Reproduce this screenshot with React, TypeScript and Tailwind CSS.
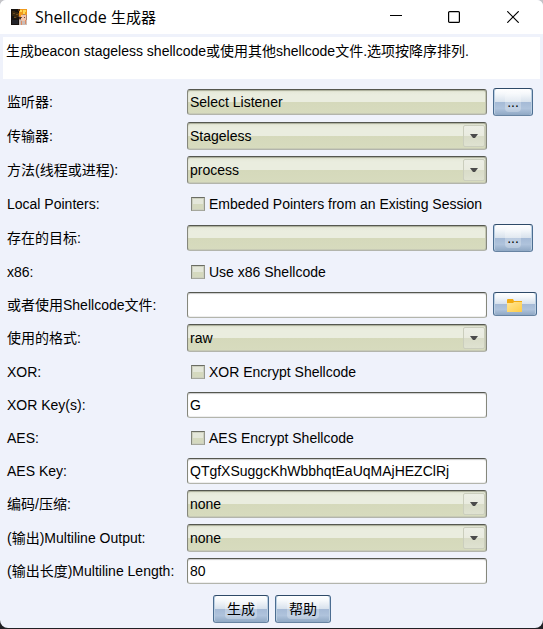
import type { ReactNode } from "react";

const FIELD_EDGE =
  "w-full min-w-0 rounded-[3px] border border-t-[#55574f] border-r-[#85877c] border-b-[#b3b5ac] border-l-[#85877c] pl-[2px] text-sm text-black outline-none";
const OLIVE =
  "bg-[linear-gradient(#e4e7d6_0%,#eaeddf_20%,#eaeddf_50%,#d5d9bb_50%,#d7dbbe_100%)] shadow-[inset_0_1px_1px_#a9ac98,inset_0_-1px_0_#c8cbb6,inset_-1px_0_0_#c8cbb6]";
const BLUE =
  "flex items-center justify-center rounded-[3px] border border-t-[#2e4a68] border-r-[#4b6d91] border-b-[#6884a2] border-l-[#4b6d91] bg-[linear-gradient(#ffffff_0%,#f5f8fb_18%,#d7e1ec_50%,#a5bad6_50%,#afc3dc_75%,#8fa8c4_100%)] text-sm text-black shadow-[inset_1px_0_0_#bccfe2,inset_-1px_0_0_#bccfe2]";

function Row({ id, label, action, children }: { id: string; label: string; action?: ReactNode; children: ReactNode }) {
  return (
    <div className="grid grid-cols-[174px_minmax(0,1fr)_44px] items-center gap-[6px]">
      <label htmlFor={id} className="whitespace-nowrap text-sm leading-5">
        {label}
      </label>
      {children}
      {action}
    </div>
  );
}

function TextRow({ id, label, value = "", olive = false, action }: { id: string; label: string; value?: string; olive?: boolean; action?: ReactNode }) {
  const look = olive ? OLIVE : "bg-white shadow-[inset_0_1px_1px_#c9c9c9,inset_0_-1px_0_#eeeeee]";
  return (
    <Row id={id} label={label} action={action}>
      <input id={id} type="text" defaultValue={value} readOnly={olive} className={`h-[26px] ${FIELD_EDGE} ${look}`} />
    </Row>
  );
}

function SelectRow({ id, label, options }: { id: string; label: string; options: string[] }) {
  return (
    <Row id={id} label={label}>
      <div className="relative">
        <select id={id} className={`block h-7 appearance-none ${FIELD_EDGE} ${OLIVE}`}>
          {options.map((o) => (
            <option key={o}>{o}</option>
          ))}
        </select>
        <span className="pointer-events-none absolute top-[3px] right-[2px] flex h-[22px] w-[22px] items-center justify-center rounded-[2px] border border-[#cbcebd] bg-[linear-gradient(#eceee5_0%,#e9ebdf_50%,#d9dcc8_50%,#dfe2d1_100%)]">
          <svg width="8" height="4" viewBox="0 0 8 4" aria-hidden="true">
            <path d="M0 0h8L5 4H3z" fill="#4b4b4b" />
          </svg>
        </span>
      </div>
    </Row>
  );
}

function CheckRow({ id, label, text }: { id: string; label: string; text: string }) {
  return (
    <Row id={id} label={label}>
      <div className="flex h-7 items-center gap-1 pl-1">
        <input
          id={id}
          type="checkbox"
          className="h-[14px] w-[14px] shrink-0 appearance-none border border-t-[#6a6c63] border-r-[#96988d] border-b-[#a6a89d] border-l-[#85877c] bg-[linear-gradient(#e4e7da_50%,#d5d9bf_50%)] shadow-[inset_0_0_0_1px_#cdd0bf] checked:bg-[#85877c]"
        />
        <label htmlFor={id} className="whitespace-nowrap text-sm leading-5">
          {text}
        </label>
      </div>
    </Row>
  );
}

function MoreButton({ name }: { name: string }) {
  return (
    <button type="button" aria-label={name} className={`h-7 w-10 ${BLUE}`}>
      <span className="rounded bg-white/25 px-[2px] leading-5">...</span>
    </button>
  );
}

function FolderButton() {
  return (
    <button type="button" aria-label="文件" className={`h-6 w-11 self-start ${BLUE}`}>
      <svg width="16" height="14" viewBox="0 0 16 14" className="mt-1" aria-hidden="true">
        <defs>
          <linearGradient id="folder" x1="0" y1="0" x2="1" y2="1">
            <stop offset="0" stopColor="#ffe596" />
            <stop offset="1" stopColor="#ffcc45" />
          </linearGradient>
        </defs>
        <path d="M0 1q0-1 1-1h5l1 2h8v3H0z" fill="#f2ab12" />
        <path d="M0 4h6l1-1h8v10H0z" fill="url(#folder)" />
      </svg>
    </button>
  );
}

function AppIcon() {
  return (
    <svg width="16" height="16" viewBox="0 0 16 16" aria-hidden="true" shapeRendering="crispEdges">
      <path d="M0 0h16v16H0z" fill="#17130f" />
      <path d="M1 2h3v1h3v2h1v3H6v1H3V7H1z" fill="#35260f" />
      <path d="M2 4h2v1H2zM5 5h2v1H5zM3 8h2v1H3z" fill="#6b4a1b" />
      <path d="M8 0h8v16H8z" fill="#a8816a" />
      <path d="M8 0h8v6h-2l-1-1-2 1-1 2-2-1z" fill="#ef9a1e" />
      <path d="M9 1h2v2H9zM12 1h3v2h-1v2h-2z" fill="#ffd853" />
      <path d="M7 0h2v2H7zM7 4h1v4H7z" fill="#5d3512" />
      <path d="M10 6h5v4l-1 2h-3l-1-2z" fill="#f3c4a8" />
      <path d="M10 8h1v1h-1zM13 8h1v1h-1z" fill="#6b4a40" />
      <path d="M8 8h2v2H8z" fill="#4e3327" />
      <path d="M8 11h3v1h3v-1h2v5H8z" fill="#c9bdb8" />
      <path d="M10 12h1v4h-1zM14 11h1v4h-1z" fill="#e08a60" />
      <path d="M1 11h6v4H1z" fill="#23242a" />
    </svg>
  );
}

export default function App() {
  return (
    <div className="bg-[linear-gradient(#c4c4c8_50%,#202024_50%)] pb-px font-['Liberation_Sans','Noto_Sans_CJK_SC',sans-serif] text-black">
      <main className="overflow-hidden rounded-t-[6px] rounded-b-[8px] bg-[#eff2fb] pb-[5px]">
        <header className="flex h-[34px] items-center bg-white pl-[11px] font-['Open_Sans','Noto_Sans_CJK_SC',sans-serif]">
          <AppIcon />
          <h1 className="ml-2 flex-1 text-base leading-5">
            Shellcode <span className="text-[15px]">生成器</span>
          </h1>
          <div className="flex items-center self-stretch">
            <button type="button" aria-label="Minimize" className="flex w-[58px] items-center justify-center">
              <svg width="12" height="12" viewBox="0 0 12 12" aria-hidden="true">
                <path d="M0 4.5h12" stroke="#000" />
              </svg>
            </button>
            <button type="button" aria-label="Maximize" className="flex w-[58px] items-center justify-center">
              <svg width="12" height="12" viewBox="0 0 12 12" fill="none" stroke="#000" aria-hidden="true">
                <rect x=".6" y=".6" width="10.8" height="10.8" rx="1" strokeWidth="1.2" />
              </svg>
            </button>
            <button type="button" aria-label="Close" className="flex w-[60px] items-center justify-center">
              <svg width="12" height="12" viewBox="0 0 12 12" stroke="#000" aria-hidden="true">
                <path d="M.3.3l11.4 11.4M11.7.3L.3 11.7" strokeWidth="1.2" />
              </svg>
            </button>
          </div>
        </header>
        <p className="mx-[3px] mt-[3px] min-h-[42px] bg-white px-[3px] py-1 text-sm leading-5">
          生成beacon stageless shellcode或使用其他shellcode文件.选项按降序排列.
        </p>
        <form className="mt-[9px] flex flex-col gap-[6px] pr-[6px] pl-[7px]" onSubmit={(e) => e.preventDefault()}>
          <TextRow id="listener" label="监听器:" value="Select Listener" olive action={<MoreButton name="监听器" />} />
          <SelectRow id="stager" label="传输器:" options={["Stageless"]} />
          <SelectRow id="method" label="方法(线程或进程):" options={["process"]} />
          <CheckRow id="pointers" label="Local Pointers:" text="Embeded Pointers from an Existing Session" />
          <TextRow id="target" label="存在的目标:" olive action={<MoreButton name="存在的目标" />} />
          <CheckRow id="x86" label="x86:" text="Use x86 Shellcode" />
          <TextRow id="file" label="或者使用Shellcode文件:" action={<FolderButton />} />
          <SelectRow id="format" label="使用的格式:" options={["raw"]} />
          <CheckRow id="xor" label="XOR:" text="XOR Encrypt Shellcode" />
          <TextRow id="xorkey" label="XOR Key(s):" value="G" />
          <CheckRow id="aes" label="AES:" text="AES Encrypt Shellcode" />
          <TextRow id="aeskey" label="AES Key:" value="QTgfXSuggcKhWbbhqtEaUqMAjHEZClRj" />
          <SelectRow id="encoding" label="编码/压缩:" options={["none"]} />
          <SelectRow id="multiline" label="(输出)Multiline Output:" options={["none"]} />
          <TextRow id="length" label="(输出长度)Multiline Length:" value="80" />
          <div className="mt-[5px] flex justify-center gap-[6px]">
            <button type="submit" className={`h-7 w-14 ${BLUE}`}>
              <span className="rounded bg-white/25 px-[2px] leading-5">生成</span>
            </button>
            <button type="button" className={`h-7 w-14 ${BLUE}`}>
              <span className="rounded bg-white/25 px-[2px] leading-5">帮助</span>
            </button>
          </div>
        </form>
      </main>
    </div>
  );
}
